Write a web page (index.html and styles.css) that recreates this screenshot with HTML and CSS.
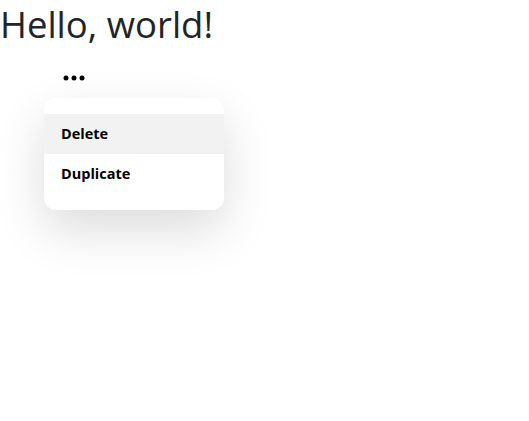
FILE: index.html
```html
<!DOCTYPE html>
<html lang="en">
<head>
<meta charset="utf-8">
<title>Menu</title>
<link rel="stylesheet" href="styles.css">
</head>
<body>
<h1 class="title">Hello, world!</h1>
<div class="menu-wrap">
  <button class="kebab" aria-label="More options">
    <svg width="22" height="6" viewBox="0 0 22 6" aria-hidden="true">
      <circle cx="3" cy="3" r="2.5" fill="#000"/>
      <circle cx="11" cy="3" r="2.5" fill="#000"/>
      <circle cx="19" cy="3" r="2.5" fill="#000"/>
    </svg>
  </button>
  <div class="dropdown">
    <div class="option option-active">Delete</div>
    <div class="option">Duplicate</div>
  </div>
</div>
</body>
</html>
```
FILE: styles.css
```css
html, body {
  margin: 0;
  padding: 0;
  background: #fff;
}
body {
  min-height: 421px;
  font-family: "Open Sans", "Noto Sans", sans-serif;
  color: #212529;
}
.title {
  margin: 0;
  font-size: 36.5px;
  font-weight: 500;
  line-height: 48px;
  white-space: nowrap;
}
.menu-wrap {
  display: flex;
  flex-direction: column;
  align-items: flex-start;
  padding-top: 27px;
}
.kebab {
  display: block;
  border: 0;
  background: none;
  padding: 0;
  margin: 0 0 0 63px;
  width: 22px;
  height: 6px;
  cursor: pointer;
}
.kebab svg {
  display: block;
}
.dropdown {
  margin: 17px 0 0 44px;
  width: 180px;
  padding: 16px 0;
  background: #fff;
  border-radius: 12px;
  box-shadow: 0 20px 50px rgba(0, 0, 0, 0.14);
}
.option {
  height: 40px;
  line-height: 40px;
  padding: 0 17px;
  font-size: 14.5px;
  font-weight: 700;
  color: #000;
}
.option-active {
  background: #f2f2f2;
}
```
